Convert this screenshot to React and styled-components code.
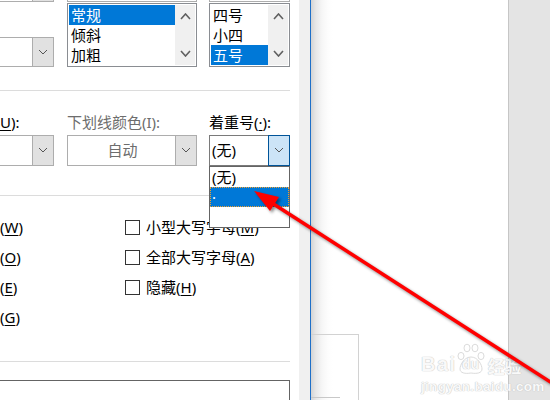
import React from "react";
import styled, { createGlobalStyle } from "styled-components";

const GlobalStyle = createGlobalStyle`
  html, body { margin: 0; padding: 0; background: #fff; }
  body { font-family: "Noto Sans", "Noto Sans CJK SC", sans-serif; }
  * { box-sizing: border-box; }
`;

const Screen = styled.div`
  position: relative;
  width: 550px;
  height: 400px;
  overflow: hidden;
  display: flex;
  background: #fff;
`;

const Dialog = styled.div`
  flex: none;
  width: 299px;
  height: 100%;
  padding-right: 9px;
  display: flex;
  flex-direction: column;
  font-size: 15px;
  color: #000;
  background: #fff;
`;

const Columns = styled.div`
  display: grid;
  grid-template-columns: 67px 142px 81px;
  align-items: start;
  margin-top: ${(p) => p.$mt || 0}px;
`;

const Cell = styled.div`
  position: relative;
  display: flex;
  flex-direction: column;
  width: ${(p) => p.$w}px;
`;

const ComboBox = styled.div`
  display: flex;
  height: ${(p) => p.$h || 31}px;
  margin-top: ${(p) => p.$mt || 0}px;
  border: 1px solid ${(p) => (p.$focus ? "#7a7a7a" : "#adadad")};
  ${(p) => p.$cut && "border-left: none;"}
  background: #fff;
`;

const ComboText = styled.div`
  flex: 1;
  display: flex;
  align-items: center;
  justify-content: ${(p) => (p.$center ? "center" : "flex-start")};
  padding-left: 2px;
  color: ${(p) => (p.$disabled ? "#6d6d6d" : "#000")};
  line-height: 1;
`;

const DropButton = styled.div`
  flex: none;
  width: 21px;
  display: flex;
  align-items: center;
  justify-content: center;
  background: #e1e1e1;
  border-left: 1px solid #adadad;
  ${(p) =>
    p.$focus &&
    `
    background: #cce4f7;
    border: 1px solid #005499;
    margin: -1px -1px -1px 0;
    width: 22px;
  `}
`;

const EditBox = styled.div`
  height: 30px;
  border: 1px solid #adadad;
  background: #fff;
`;

const ListBox = styled.div`
  display: flex;
  height: 64px;
  margin-top: 1px;
  border: 1px solid #8a8d92;
  padding: 1px;
  background: #fff;
`;

const ListItems = styled.div`
  flex: 1;
  display: flex;
  flex-direction: column;
`;

const ListItem = styled.div`
  height: 20px;
  line-height: 20px;
  padding-left: 2px;
  white-space: nowrap;
  background: ${(p) => (p.$sel ? "#0078d7" : "transparent")};
  color: ${(p) => (p.$sel ? "#fff" : "#000")};
`;

const ScrollBar = styled.div`
  flex: none;
  width: 20px;
  background: #f0f0f0;
  display: flex;
  flex-direction: column;
  justify-content: space-between;
  align-items: center;
  padding: 8px 0 8px;
`;

const Separator = styled.div`
  height: 1px;
  background: #dcdcdc;
  margin-top: ${(p) => p.$mt}px;
`;

const Label = styled.div`
  height: 20px;
  line-height: 20px;
  white-space: nowrap;
  color: ${(p) => (p.$disabled ? "#6d6d6d" : "#000")};
`;

const Key = styled.span`
  text-decoration: underline;
  text-underline-offset: 2px;
  text-decoration-thickness: 1px;
`;

const DropList = styled.div`
  position: absolute;
  top: 100%;
  left: 0;
  width: 81px;
  height: 62px;
  border: 1px solid #646464;
  background: #fff;
  z-index: 2;
  display: flex;
  flex-direction: column;
`;

const DropItem = styled.div`
  height: 20px;
  line-height: 20px;
  padding-left: 2px;
  background: ${(p) => (p.$sel ? "#0078d7" : "#fff")};
  color: ${(p) => (p.$sel ? "#fff" : "#000")};
  ${(p) => p.$sel && "outline: 1px dotted #f0a030; outline-offset: -1px;"}
`;

const CheckGrid = styled.div`
  display: grid;
  grid-template-columns: 125px 1fr;
  grid-auto-rows: 30px;
  margin-top: 17px;
`;

const CheckItem = styled.div`
  display: flex;
  align-items: center;
  gap: 6px;
  white-space: nowrap;
  line-height: 20px;
`;

const Box = styled.span`
  flex: none;
  width: 15px;
  height: 15px;
  border: 1px solid #333;
  background: #fff;
`;

const BottomBox = styled.div`
  margin-top: 18px;
  height: 40px;
  border: 1px solid #646464;
  border-left: none;
  border-bottom: none;
`;

const Strip = styled.div`
  flex: none;
  width: 11px;
  background: #f0f0f0;
`;

const BlueEdge = styled.div`
  flex: none;
  width: 1px;
  background: #1f70c8;
`;

const Doc = styled.div`
  flex: none;
  width: 197px;
  display: flex;
  flex-direction: column;
  background: linear-gradient(
    to right,
    #d4d4d4 0px,
    #e8e8e8 5px,
    #f6f6f6 11px,
    #fdfdfd 17px,
    #ffffff 22px
  );
`;

const PageFrame = styled.div`
  margin-top: 334px;
  width: 48px;
  flex: 1;
  border-top: 1px solid #d2d2d2;
  border-right: 1px solid #d2d2d2;
  display: flex;
  flex-direction: column;
`;

const PageMark = styled.div`
  margin-top: 62px;
  width: 29px;
  height: 1px;
  background: #c8c8c8;
`;

const Gutter = styled.div`
  flex: 1;
  background: #e4e4e4;
  border-left: 1px solid #c6c6c6;
`;

const Overlay = styled.svg`
  position: absolute;
  left: 0;
  top: 0;
  width: 550px;
  height: 400px;
  pointer-events: none;
  z-index: 5;
  filter: drop-shadow(2px 2px 1.5px rgba(0, 0, 0, 0.45));
`;

const Watermark = styled.div`
  position: absolute;
  left: 421px;
  top: 339px;
  z-index: 4;
  display: flex;
  flex-direction: column;
  pointer-events: none;
  color: rgba(255, 255, 255, 0.92);
  text-shadow: 0 0 1px #c4c4c4, 0 0 1px #c4c4c4;
`;

const MarkRow = styled.div`
  display: flex;
  align-items: flex-end;
  height: 36px;
`;

const MarkBai = styled.span`
  font-family: "Liberation Sans", Arial, sans-serif;
  font-weight: 700;
  font-size: 20px;
  letter-spacing: 1.5px;
  line-height: 18px;
  margin-bottom: 2px;
`;

const Paw = styled.span`
  position: relative;
  width: 28px;
  height: 34px;
  display: flex;
  align-items: flex-end;
  justify-content: center;
`;

const PawDu = styled.span`
  position: relative;
  font-family: "Liberation Sans", Arial, sans-serif;
  font-weight: 700;
  font-size: 14px;
  line-height: 13px;
  margin-bottom: 4px;
`;

const MarkCn = styled.span`
  font-family: "Noto Sans CJK SC", sans-serif;
  font-weight: 700;
  font-size: 17px;
  line-height: 18px;
  margin-left: 3px;
  margin-bottom: 0px;
`;

const MarkUrl = styled.span`
  font-family: "Liberation Sans", Arial, sans-serif;
  font-weight: 700;
  font-size: 13.5px;
  line-height: 14px;
  margin-top: 5px;
  letter-spacing: 0.3px;
`;

const Chevron = ({ w = 8, h = 4, up = false, color = "#5a5a5a", sw = 1 }) => (
  <svg width={w + 2} height={h + 2} viewBox={`0 0 ${w + 2} ${h + 2}`}>
    <polyline
      points={
        up
          ? `1,${h + 1} ${w / 2 + 1},1 ${w + 1},${h + 1}`
          : `1,1 ${w / 2 + 1},${h + 1} ${w + 1},1`
      }
      fill="none"
      stroke={color}
      strokeWidth={sw}
    />
  </svg>
);

const Combo = ({ text, h, mt, cut, center, disabled, focus }) => (
  <ComboBox $h={h} $mt={mt} $cut={cut} $focus={focus}>
    <ComboText $center={center} $disabled={disabled}>
      {text}
    </ComboText>
    <DropButton $focus={focus}>
      <Chevron w={8} h={4} color="#555" />
    </DropButton>
  </ComboBox>
);

const List = ({ items, sel }) => (
  <ListBox>
    <ListItems>
      {items.map((t) => (
        <ListItem key={t} $sel={t === sel}>
          {t}
        </ListItem>
      ))}
    </ListItems>
    <ScrollBar>
      <Chevron w={9} h={5} up sw={1.6} color="#606060" />
      <Chevron w={9} h={5} sw={1.6} color="#606060" />
    </ScrollBar>
  </ListBox>
);

const Check = ({ box, children }) => (
  <CheckItem>
    {box && <Box />}
    <span>{children}</span>
  </CheckItem>
);

export default function App() {
  return (
    <>
      <GlobalStyle />
      <Screen>
        <Dialog>
          <Columns $mt={-28}>
            <Cell $w={54}>
              <Combo h={30} cut />
              <Combo h={30} mt={35} cut />
            </Cell>
            <Cell $w={130}>
              <EditBox />
              <List items={["常规", "倾斜", "加粗"]} sel="常规" />
            </Cell>
            <Cell $w={81}>
              <EditBox />
              <List items={["四号", "小四", "五号"]} sel="五号" />
            </Cell>
          </Columns>

          <Separator $mt={23} />

          <Columns $mt={21}>
            <Label>
              <Key>U</Key>):
            </Label>
            <Label $disabled>下划线颜色(I):</Label>
            <Label>
              着重号(<Key>·</Key>):
            </Label>
          </Columns>

          <Columns $mt={3}>
            <Cell $w={54}>
              <Combo cut />
            </Cell>
            <Cell $w={130}>
              <Combo text="自动" center disabled />
            </Cell>
            <Cell $w={81}>
              <Combo text="(无)" focus />
              <DropList>
                <DropItem>(无)</DropItem>
                <DropItem $sel>·</DropItem>
              </DropList>
            </Cell>
          </Columns>

          <Separator $mt={29} />

          <CheckGrid>
            <Check>
              (<Key>W</Key>)
            </Check>
            <Check box>
              小型大写字母(<Key>M</Key>)
            </Check>
            <Check>
              (<Key>O</Key>)
            </Check>
            <Check box>
              全部大写字母(<Key>A</Key>)
            </Check>
            <Check>
              (<Key>E</Key>)
            </Check>
            <Check box>
              隐藏(<Key>H</Key>)
            </Check>
            <Check>
              (<Key>G</Key>)
            </Check>
          </CheckGrid>

          <Separator $mt={29} />
          <BottomBox />
        </Dialog>

        <Strip />
        <BlueEdge />
        <Doc>
          <PageFrame>
            <PageMark />
          </PageFrame>
        </Doc>
        <Gutter />

        <Watermark>
          <MarkRow>
            <MarkBai>Bai</MarkBai>
            <Paw>
              <svg
                width="28"
                height="34"
                viewBox="0 0 28 34"
                style={{ position: "absolute", left: 0, top: 0 }}
              >
                <g fill="rgba(255,255,255,0.9)" stroke="#d2d2d2" strokeWidth="0.8">
                  <ellipse cx="4" cy="15" rx="3" ry="3.6" />
                  <ellipse cx="10" cy="7" rx="3" ry="3.8" />
                  <ellipse cx="18" cy="7" rx="3" ry="3.8" />
                  <ellipse cx="24" cy="15" rx="3" ry="3.6" />
                  <path d="M14 16 C7 16 3 24 3 28 C3 32 8 33 14 32 C20 33 25 32 25 28 C25 24 21 16 14 16 Z" />
                </g>
              </svg>
              <PawDu>du</PawDu>
            </Paw>
            <MarkCn>经验</MarkCn>
          </MarkRow>
          <MarkUrl>jingyan.baidu.com</MarkUrl>
        </Watermark>

        <Overlay viewBox="0 0 550 400">
          <line x1="272" y1="203" x2="566" y2="392" stroke="#ff0000" strokeWidth="3.5" />
          <polygon points="254,191 279,197 270,211" fill="#ff0000" />
        </Overlay>
      </Screen>
    </>
  );
}
